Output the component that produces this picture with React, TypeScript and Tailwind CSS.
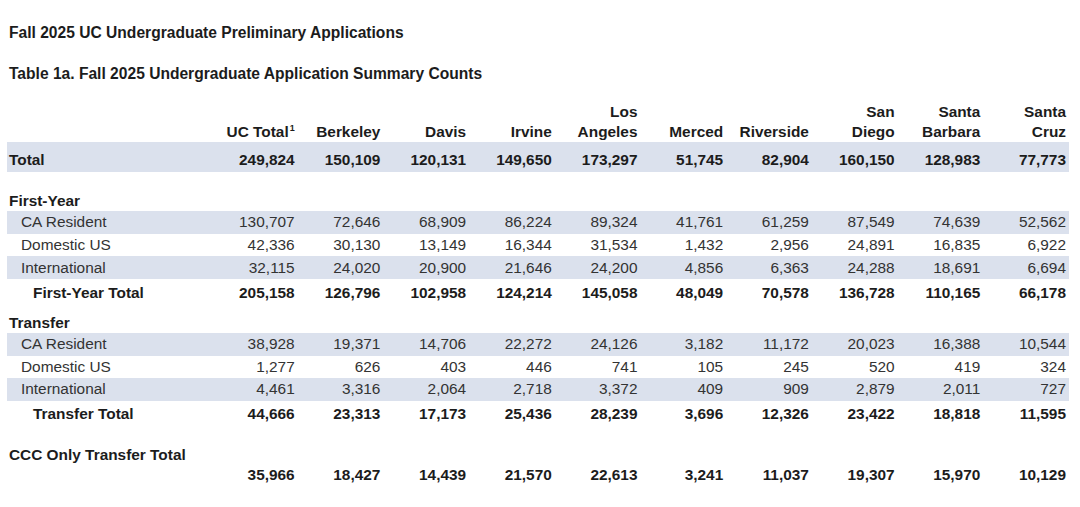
import React from "react";

const headers: string[][] = [
  ["", "UC Total"],
  ["", "Berkeley"],
  ["", "Davis"],
  ["", "Irvine"],
  ["Los", "Angeles"],
  ["", "Merced"],
  ["", "Riverside"],
  ["San", "Diego"],
  ["Santa", "Barbara"],
  ["Santa", "Cruz"],
];

const rows = {
  total: ["249,824", "150,109", "120,131", "149,650", "173,297", "51,745", "82,904", "160,150", "128,983", "77,773"],
  fyCa: ["130,707", "72,646", "68,909", "86,224", "89,324", "41,761", "61,259", "87,549", "74,639", "52,562"],
  fyDom: ["42,336", "30,130", "13,149", "16,344", "31,534", "1,432", "2,956", "24,891", "16,835", "6,922"],
  fyIntl: ["32,115", "24,020", "20,900", "21,646", "24,200", "4,856", "6,363", "24,288", "18,691", "6,694"],
  fyTotal: ["205,158", "126,796", "102,958", "124,214", "145,058", "48,049", "70,578", "136,728", "110,165", "66,178"],
  trCa: ["38,928", "19,371", "14,706", "22,272", "24,126", "3,182", "11,172", "20,023", "16,388", "10,544"],
  trDom: ["1,277", "626", "403", "446", "741", "105", "245", "520", "419", "324"],
  trIntl: ["4,461", "3,316", "2,064", "2,718", "3,372", "409", "909", "2,879", "2,011", "727"],
  trTotal: ["44,666", "23,313", "17,173", "25,436", "28,239", "3,696", "12,326", "23,422", "18,818", "11,595"],
  ccc: ["35,966", "18,427", "14,439", "21,570", "22,613", "3,241", "11,037", "19,307", "15,970", "10,129"],
};

const grid = "grid grid-cols-[205px_repeat(10,minmax(0,1fr))] items-center";

interface RowProps {
  label?: string;
  values?: string[];
  shaded?: boolean;
  bold?: boolean;
  indent?: "none" | "sub" | "total";
  height: string;
}

function Row({ label = "", values, shaded, bold, indent = "none", height }: RowProps) {
  const pad = indent === "sub" ? "pl-[14px]" : indent === "total" ? "pl-[26px]" : "pl-[2px]";
  return (
    <div
      className={`${grid} ${height} ${shaded ? "bg-[#dbe1ed]" : ""} ${
        bold ? "font-bold text-[#1c1c1c]" : "text-[#333333]"
      }`}
    >
      <div className={`${pad} whitespace-nowrap`}>{label}</div>
      {values?.map((v, i) => (
        <div key={i} className="text-right pr-[3px]">
          {v}
        </div>
      ))}
    </div>
  );
}

export default function App() {
  return (
    <div className="w-[1080px] h-[507px] bg-white overflow-hidden font-['Liberation_Sans',Arial,sans-serif] text-[15.4px] leading-[20px] text-[#1c1c1c]">
      {/* Titles */}
      <div className="pl-[9px] pt-[23px]">
        <h1 className="font-bold text-[15.6px]">Fall 2025 UC Undergraduate Preliminary Applications</h1>
        <h2 className="font-bold text-[15.6px] mt-[21px]">Table 1a. Fall 2025 Undergraduate Application Summary Counts</h2>
      </div>

      <div className="ml-[7px] w-[1062px] mt-[18px]">
        {/* Column headers */}
        <div className={`${grid} items-end font-bold`}>
          <div />
          {headers.map((h, i) => (
            <div key={i} className="text-right pr-[3px] flex flex-col">
              <span className="h-[20px]">{h[0]}</span>
              <span>
                {h[1]}
                {i === 0 && (
                  <span className="inline-block align-top text-[9px] leading-[9px] relative top-[2px] ml-[1px]">1</span>
                )}
              </span>
            </div>
          ))}
        </div>

        <Row label="Total" values={rows.total} shaded bold height="h-[30px] pt-[5px]" />

        {/* First-Year */}
        <div className="mt-[19px]">
          <Row label="First-Year" bold height="h-[20px]" />
          <Row label="CA Resident" values={rows.fyCa} shaded indent="sub" height="h-[22.5px]" />
          <Row label="Domestic US" values={rows.fyDom} indent="sub" height="h-[22.5px]" />
          <Row label="International" values={rows.fyIntl} shaded indent="sub" height="h-[23px]" />
          <Row label="First-Year Total" values={rows.fyTotal} bold indent="total" height="h-[27px]" />
        </div>

        {/* Transfer */}
        <div className="mt-[7px]">
          <Row label="Transfer" bold height="h-[20px]" />
          <Row label="CA Resident" values={rows.trCa} shaded indent="sub" height="h-[22.5px]" />
          <Row label="Domestic US" values={rows.trDom} indent="sub" height="h-[22.5px]" />
          <Row label="International" values={rows.trIntl} shaded indent="sub" height="h-[22.5px]" />
          <Row label="Transfer Total" values={rows.trTotal} bold indent="total" height="h-[27px]" />
        </div>

        {/* CCC */}
        <div className="mt-[17px]">
          <Row label="CCC Only Transfer Total" bold height="h-[20px]" />
          <Row values={rows.ccc} bold height="h-[20px]" />
        </div>
      </div>
    </div>
  );
}
